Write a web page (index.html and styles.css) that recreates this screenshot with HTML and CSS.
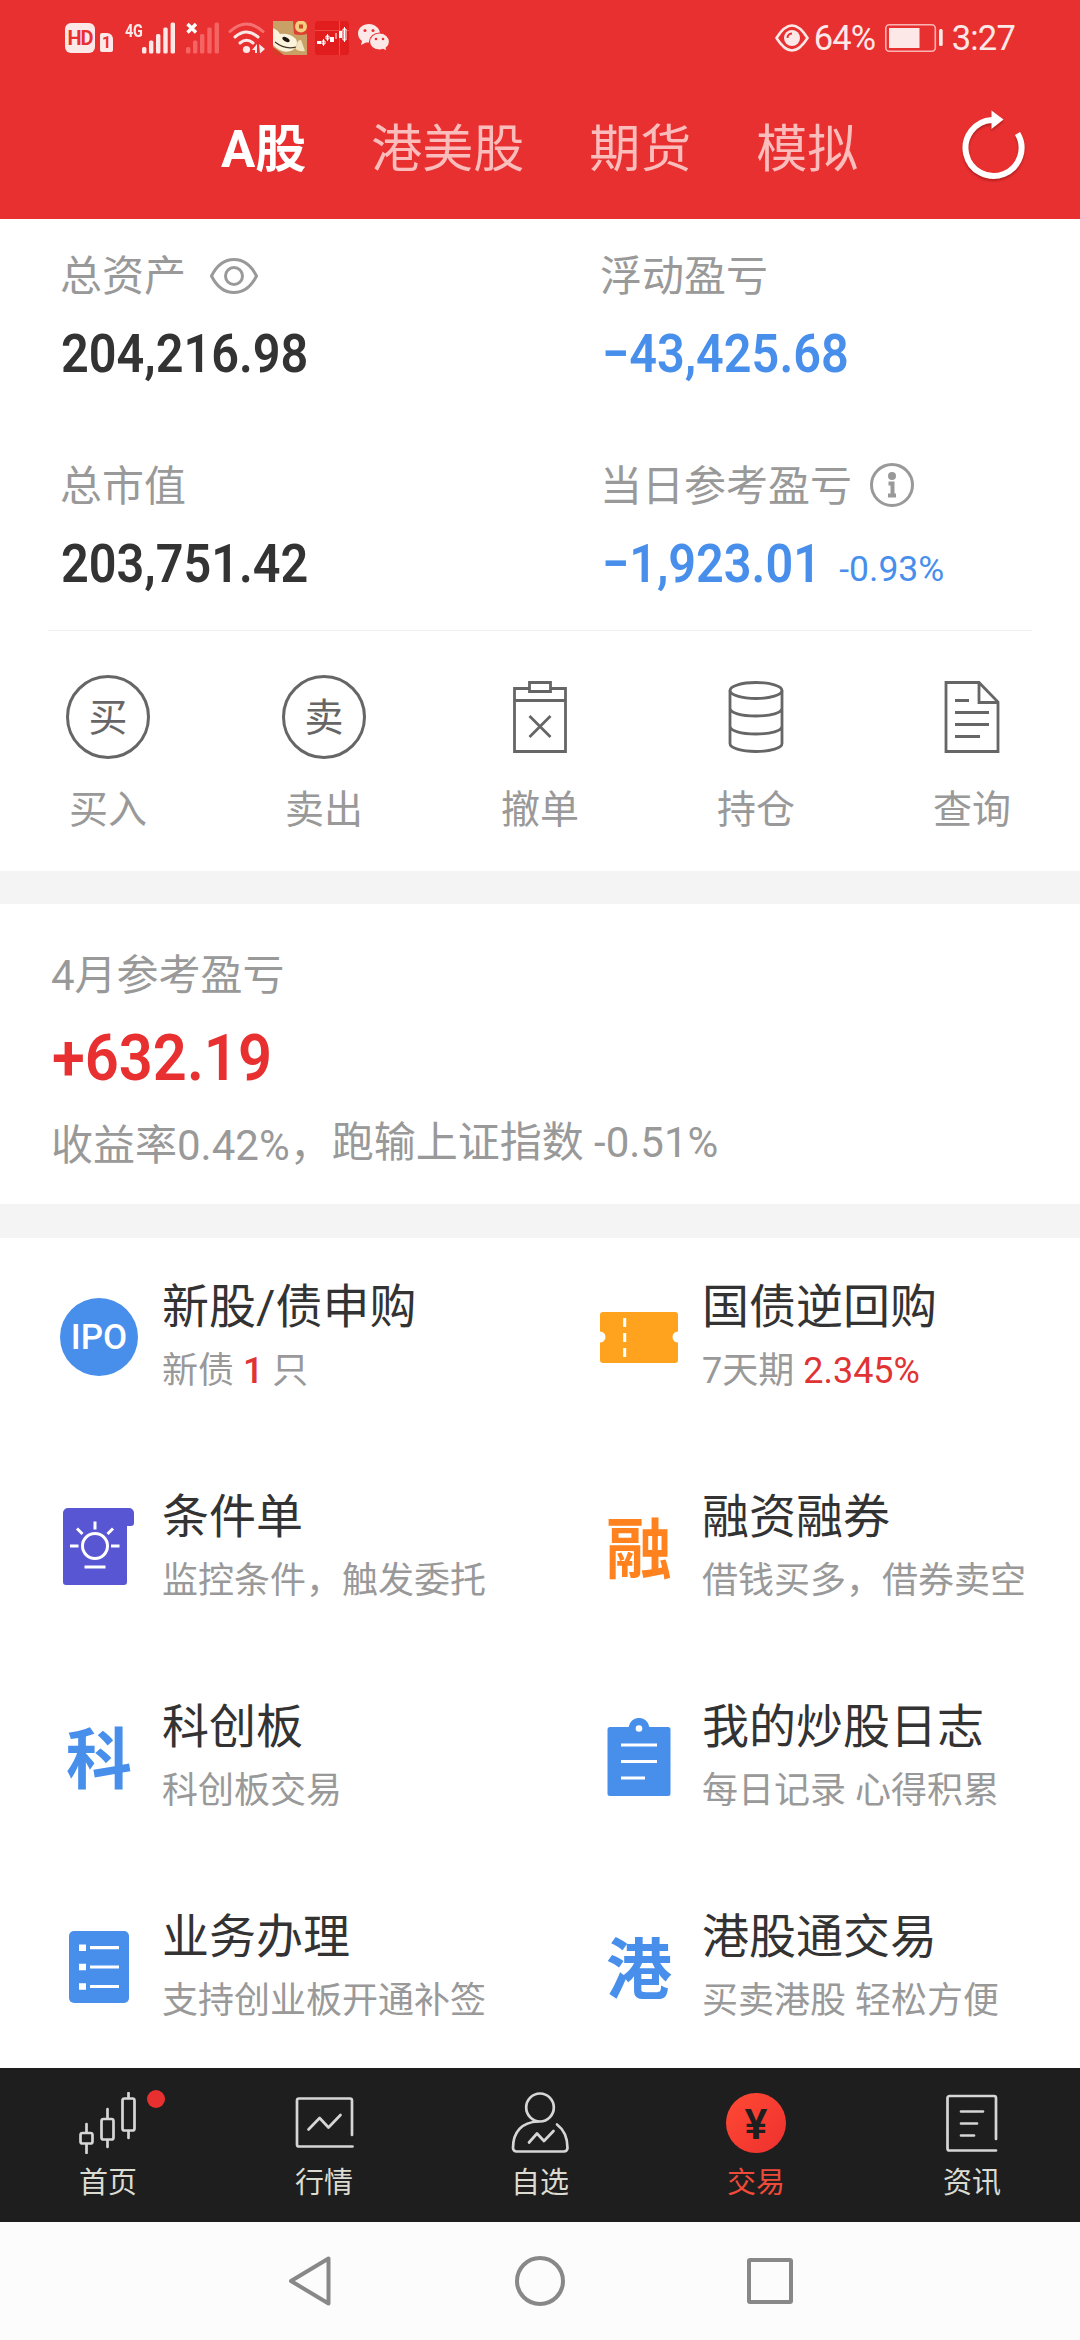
FILE: index.html
```html
<!DOCTYPE html>
<html lang="zh-CN">
<head>
<meta charset="utf-8">
<title>交易</title>
<link rel="stylesheet" href="styles.css">
</head>
<body>
<div class="screen">
  <header class="header">
    <div class="status">
      <div class="status-left">
        <span class="hd">HD</span>
        <span class="sim">1</span>
        <span class="net">4G</span>
        <svg class="signal" viewBox="0 0 33 32"><g fill="#fde8e8"><rect x="0" y="25" width="4.4" height="6.5" rx="1.5"/><rect x="7" y="18.500" width="4.400" height="13" rx="1.500"/><rect x="14" y="12" width="4.400" height="19.500" rx="1.500"/><rect x="21.300" y="5.500" width="4.400" height="26" rx="1.500"/><rect x="28.600" y="0.500" width="4.400" height="31" rx="1.500"/></g></svg>
        <svg class="signal off" viewBox="0 0 33 32"><g fill="#f56464"><rect x="0" y="25" width="4.400" height="6.500" rx="1.500"/><rect x="7" y="18.500" width="4.400" height="13" rx="1.500"/><rect x="14" y="12" width="4.400" height="19.500" rx="1.500"/><rect x="21.300" y="5.500" width="4.400" height="26" rx="1.500"/><rect x="28.600" y="0.500" width="4.400" height="31" rx="1.500"/></g><path d="M1.500 2l8.500 8.500M10 2l-8.500 8.500" stroke="#fff" stroke-width="3.400"/></svg>
        <svg class="wifi" viewBox="0 0 38 32"><g fill="none" stroke-linecap="round" stroke-width="3"><path d="M2 9.500Q18.500-5.500 35 9.500" stroke="#f57070"/><path d="M7 15q11.500-10 23 0M12 21q6.500-5.500 13 0" stroke="#fde8e8"/></g><circle cx="18.500" cy="27.500" r="3.600" fill="#fde8e8"/><path d="M24 28l5-6v9h-2v-3zM31 22l6 5-5 4.500z" fill="#fde8e8"/></svg>
        <svg class="app" viewBox="0 0 34 34"><rect width="34" height="34" fill="#c9a066"/><path d="M0 7Q5 9 7 13Q17 12 23 18Q26 24 20 29Q10 34 0 24z" fill="#fbf3dc"/><path d="M24 24q0-5 4-5l4 11q-7 1-10-3z" fill="#f3e4c0"/><path d="M2 21q10 8 21 5" fill="none" stroke="#443322" stroke-width="1.200"/><ellipse cx="13" cy="18.500" rx="4" ry="2" transform="rotate(30 13 18.500)" fill="#201510"/><path d="M0 26l11 8H0z" fill="#d83a28"/><path d="M20 0h14v13q-7 2-13 0z" fill="#dd4030"/><circle cx="28" cy="5.500" r="6" fill="#f5cf80"/><rect x="26" y="3.500" width="4" height="4" fill="#cf4a2a"/></svg>
        <svg class="app" viewBox="0 0 34 34"><rect width="34" height="34" rx="3" fill="#e11d1d"/><path d="M0 9.500h34M24.500 0v34" stroke="#ef4a45"/><path d="M2 20h4v3H2zM15 16h4v5h-4zM24 10h3v7h-3z" fill="#fff"/><path d="M8.500 18v7M7 20h3v3H7zM12.500 13v7M11 15h3v3h-3zM21 12v6M29.500 6v15M28 8h3v11h-3z" fill="#e11d1d" stroke="#fff" stroke-width="1"/></svg>
        <svg class="wechat" viewBox="0 0 32 28"><path d="M11 0C5 0 0 4 0 9.500c0 3 1.500 5.500 4 7.500l-1 4 5-2.500h3C17 18.500 22 14.500 22 9.500S17 0 11 0z" fill="#fde8e8"/><path d="M21.500 9C16 9 11.500 13 11.500 17.800S16 26 21.500 26c1.200 0 2.500-.2 3.600-.6l4 2-.9-3.300c2-1.500 3.300-3.800 3.300-6.300C31.500 13 27 9 21.500 9z" fill="#fde8e8" stroke="#e83030" stroke-width="1.200"/><g fill="#e83030"><circle cx="7" cy="6.500" r="1.500"/><circle cx="15" cy="6.500" r="1.500"/><circle cx="18" cy="15" r="1.300"/><circle cx="25" cy="15" r="1.300"/></g></svg>
      </div>
      <div class="status-right">
        <svg class="eye-care" viewBox="0 0 34 28"><path d="M1.500 14Q17-11 32.500 14Q17 39 1.500 14z" fill="none" stroke="#fde8e8" stroke-width="2.600"/><circle cx="17" cy="14" r="8" fill="#fde8e8"/><path d="M12.500 14q0-4 4.500-4.500" fill="none" stroke="#e83030" stroke-width="2"/></svg>
        <span class="percent">64%</span>
        <svg class="battery" viewBox="0 0 58 28"><rect x="0.800" y="0.800" width="49.500" height="26.400" rx="3.500" fill="none" stroke="#f9b4b4" stroke-width="1.600"/><rect x="4" y="4" width="30.500" height="20" fill="#fde8e8"/><rect x="54" y="5" width="3.700" height="17" rx="1.500" fill="#fde8e8"/></svg>
        <span class="clock">3:27</span>
      </div>
    </div>
    <nav class="tabs">
      <span class="tab active">A股</span><span class="tab">港美股</span><span class="tab">期货</span><span class="tab">模拟</span>
      <svg class="refresh" viewBox="0 0 70 76"><path d="M35 13A28 28 0 1 0 60.500 26.500" fill="none" stroke="#fff" stroke-width="6"/><path d="M34.500 3.500L46.500 12.500L34.500 22z" fill="#fff"/></svg>
    </nav>
  </header>

  <section class="assets">
    <div class="asset-grid">
      <div class="asset"><div class="label">总资产<svg class="eye" viewBox="0 0 50 38"><path d="M2.500 19C8 8 16 2.500 25 2.500S42 8 47.500 19C42 30 34 35.500 25 35.500S8 30 2.500 19z"/><circle cx="25" cy="19" r="8.500"/></svg></div><div class="amount"><b>204,216.98</b></div></div>
      <div class="asset"><div class="label">浮动盈亏</div><div class="amount down"><b>−43,425.68</b></div></div>
      <div class="asset"><div class="label">总市值</div><div class="amount"><b>203,751.42</b></div></div>
      <div class="asset"><div class="label">当日参考盈亏<svg class="info" viewBox="0 0 46 46"><circle cx="23" cy="23" r="20.500"/><circle class="dot" cx="23" cy="14" r="4"/><path d="M19.500 21.500H23.500V33M19 33.500H27"/></svg></div><div class="amount down"><b>−1,923.01</b><span class="rate">-0.93%</span></div></div>
    </div>
    <div class="actions">
      <div class="action"><span class="ring">买</span><span>买入</span></div>
      <div class="action"><span class="ring">卖</span><span>卖出</span></div>
      <div class="action"><svg viewBox="0 0 84 84"><path d="M31 13.500H16.500V76.500H67.500V13.500H53M16.500 25.500H67.500M31.500 7.500H52.500V16.500H31.500zM31.500 41l21 21M52.500 41l-21 21"/></svg><span>撤单</span></div>
      <div class="action"><svg viewBox="0 0 84 84"><ellipse cx="42" cy="15.500" rx="26" ry="8"/><path d="M16 15.500V68.500C16 73 27 76.500 42 76.500S68 73 68 68.500V15.500M16 33C16 38 27 41 42 41S68 38 68 33M16 51C16 56 27 59 42 59S68 56 68 51"/></svg><span>持仓</span></div>
      <div class="action"><svg viewBox="0 0 84 84"><path d="M16 7.500H49L68 27V76.500H16zM49 7.500V27.500H68M25 25.500H39M25 37.500H59M25 49.500H59M25 61.500H50"/></svg><span>查询</span></div>
    </div>
  </section>

  <section class="month">
    <div class="label">4月参考盈亏</div>
    <div class="gain"><b>+632.19</b></div>
    <div class="summary"><span class="yield">收益率0.42%，</span><span>跑输上证指数 -0.51%</span></div>
  </section>

  <section class="services">
    <div class="service"><span class="icon ipo">IPO</span><div><h3>新股/债申购</h3><p>新债 <em class="strong">1</em> 只</p></div></div>
    <div class="service"><svg class="icon" viewBox="0 0 78 78"><path d="M3 14H75a3 3 0 0 1 3 3V33.500a5.500 5.500 0 0 0 0 11V62a3 3 0 0 1-3 3H3a3 3 0 0 1-3-3V44.500a5.500 5.500 0 0 0 0-11V17a3 3 0 0 1 3-3z" fill="#ffa31f"/><path d="M24.700 20v9M24.700 35v9M24.700 50v9" stroke="#fff" stroke-width="3"/></svg><div><h3>国债逆回购</h3><p>7天期 <em>2.345%</em></p></div></div>
    <div class="service"><svg class="icon" viewBox="0 0 78 78"><path d="M8 0H69a5 5 0 0 1 5 5V15a3 3 0 0 1-3 3H67V74a3 3 0 0 1-3 3H6a3 3 0 0 1-3-3V5a5 5 0 0 1 5-5z" fill="#5956d3"/><g fill="none" stroke="#fff" stroke-width="3"><circle cx="35" cy="38" r="12.500"/><path d="M35 13.500v8M10 38h8.500M51 38h8.500M17 20.500l5.500 5.500M53 20.500l-5.500 5.500M24.500 59h21"/></g></svg><div><h3>条件单</h3><p>监控条件，触发委托</p></div></div>
    <div class="service"><span class="icon word orange">融</span><div><h3>融资融券</h3><p>借钱买多，借券卖空</p></div></div>
    <div class="service"><span class="icon word">科</span><div><h3>科创板</h3><p>科创板交易</p></div></div>
    <div class="service"><svg class="icon" viewBox="0 0 78 78"><path d="M10 9H28.600a10.500 10.500 0 0 1 20.800 0H68a2.500 2.500 0 0 1 2.500 2.500V75.500a2.500 2.500 0 0 1-2.500 2.500H10a2.500 2.500 0 0 1-2.500-2.500V11.500A2.500 2.500 0 0 1 10 9z" fill="#488fec"/><circle cx="39" cy="10.500" r="3.300" fill="#fff"/><path d="M21 27H57M21 43.500H57M21 60H45" stroke="#fff" stroke-width="3"/></svg><div><h3>我的炒股日志</h3><p>每日记录 心得积累</p></div></div>
    <div class="service"><svg class="icon" viewBox="0 0 78 78"><rect x="9" y="3" width="60" height="72" rx="5" fill="#488fec"/><path d="M30 19.700H59M30 39H59M30 58.500H59" stroke="#fff" stroke-width="3.200"/><path d="M19 19.700h7M19 39h7M19 58.500h7" stroke="#fff" stroke-width="6.600"/></svg><div><h3>业务办理</h3><p>支持创业板开通补签</p></div></div>
    <div class="service"><span class="icon word">港</span><div><h3>港股通交易</h3><p>买卖港股 轻松方便</p></div></div>
  </section>

  <nav class="tabbar">
    <div class="item"><svg viewBox="0 0 60 62"><path d="M8.500 32v8M8.500 52v9M29.500 17v9M29.500 48v7M50.500 1v5M50.500 39v7"/><rect x="2.500" y="41" width="12" height="10.500" rx="2"/><rect x="23.500" y="27" width="12" height="20.500" rx="2"/><rect x="44.500" y="6.500" width="12" height="32" rx="2"/></svg><span>首页</span><i class="badge"></i></div>
    <div class="item"><svg viewBox="0 0 60 62"><path d="M58 43V8.500a2 2 0 0 0-2-2H5a2 2 0 0 0-2 2V52.500a2 2 0 0 0 2 2H58.500M14.500 37.500L25.600 26L34.500 35.500L46.500 23"/></svg><span>行情</span></div>
    <div class="item"><svg viewBox="0 0 60 62"><ellipse cx="30" cy="15.500" rx="13.800" ry="14"/><path d="M28 29.500C12 30 3 40 3 56a3.500 3.500 0 0 0 3.500 3.500H54a3.500 3.500 0 0 0 3.500-3.500C57.500 44 53 37 47 32.500M19 50.500L27 41.500L34 49L43.500 39"/></svg><span>自选</span></div>
    <div class="item on"><span class="yen">¥</span><span>交易</span></div>
    <div class="item"><svg viewBox="0 0 60 62"><path d="M54 47V6a2 2 0 0 0-2-2H7.500a2 2 0 0 0-2 2V56.500a2 2 0 0 0 2 2H54M19 19.500H41M19 31.500H35M19 43.500H32"/></svg><span>资讯</span></div>
  </nav>

  <footer class="sysnav">
    <svg viewBox="0 0 50 52"><path d="M43.500 3.500V48.500L6 26z"/></svg>
    <svg viewBox="0 0 50 52"><circle cx="25" cy="26" r="23"/></svg>
    <svg viewBox="0 0 50 52"><rect x="4" y="5" width="42" height="42" rx="1"/></svg>
  </footer>
</div>
</body>
</html>
```
FILE: styles.css
```css
* { box-sizing: border-box; margin: 0; padding: 0; }
body { width: 1080px; height: 2340px; overflow: hidden; background: #fff; font-family: Roboto, "Noto Sans CJK SC", sans-serif; }
svg { display: block; flex: none; fill: none; }
.screen { display: flex; flex-direction: column; width: 1080px; height: 2340px; }

.header { height: 219px; background: #e83030; }
.status { height: 76px; display: flex; justify-content: space-between; align-items: center; padding: 0 65px; color: #fde8e8; }
.status-left, .status-right { display: flex; align-items: center; }
.hd { width: 30px; height: 30px; border-radius: 6px; background: #fde8e8; color: #e83030; font: 700 20px/30px Roboto, sans-serif; text-align: center; letter-spacing: -1px; }
.sim { width: 13px; height: 19px; margin: 8px 0 0 5px; border-radius: 2px 6px 2px 2px; background: #fde8e8; color: #e83030; font: 700 16px/19px Roboto, sans-serif; text-align: center; }
.net { width: 17px; margin-left: 12px; font: 700 19px/19px Roboto, sans-serif; align-self: flex-start; letter-spacing: -.5px; transform: scaleX(.76); transform-origin: left; white-space: nowrap; }
.signal { width: 33px; height: 32px; }
.off { margin-left: 11px; }
.wifi { width: 38px; height: 32px; margin-left: 9px; }
.app { width: 34px; height: 34px; margin: 0 0 0 7px; }
.app + .app { margin-left: 8px; }
.wechat { width: 32px; height: 28px; margin-left: 9px; }
.eye-care { width: 34px; height: 28px; }
.percent, .clock { font-size: 34.500px; line-height: 40px; letter-spacing: -.8px; }
.percent { width: 63px; margin-left: 5px; }
.battery { width: 58px; height: 28px; margin-left: 8px; }
.clock { margin-left: 9px; }

.tabs { height: 143px; display: flex; align-items: center; gap: 65px; padding-left: 221px; color: #fbbcbc; font-size: 51px; line-height: 70px; }
.tab { margin-top: 5px; font-weight: 400; white-space: nowrap; }
.tab.active { color: #fff; font-weight: 700; }
.refresh { width: 70px; height: 76px; margin: -6px 0 0 34px; filter: drop-shadow(0 2px 1px rgba(90, 0, 0, .35)); }

.assets { height: 652px; padding-top: 33px; }
.asset-grid { display: grid; grid-template-columns: 1fr 1fr; row-gap: 79px; margin: 0 0 37px; }
.asset { padding-left: 60px; }
.label { display: flex; align-items: center; height: 50px; color: #999; font-size: 42px; line-height: 50px; }
.label svg { stroke: #999; stroke-width: 3; }
.eye { width: 50px; height: 38px; margin: -2px 0 0 23px; }
.info { width: 46px; height: 46px; margin: -5px 0 0 17px; }
.info .dot { fill: #999; stroke: none; }
.info path { stroke-width: 4; }
.amount { display: flex; height: 60px; margin: 22px 0 -1px 1px; color: #333; font-size: 54px; line-height: 60px; }
.amount b { font-weight: 600; transform: scaleX(.9); transform-origin: left; }
.down { margin-left: 2px; color: #488fec; }
.rate { margin: 10px 0 0 -6px; font-size: 35.500px; line-height: 50px; }
.actions { display: flex; height: 241px; margin: 0 48px; padding: 44px 0 0; border-top: 1px solid #eee; justify-content: space-between; }
.action { display: flex; flex-direction: column; align-items: center; width: 120px; gap: 26px; color: #999; font-size: 39px; line-height: 50px; }
.action svg { width: 84px; height: 84px; stroke: #666; stroke-width: 2.800; }
.ring { width: 84px; height: 84px; border: 3px solid #666; border-radius: 50%; color: #666; line-height: 80px; text-align: center; }

.month { height: 367px; border: solid #f4f4f4; border-width: 33px 0 34px; padding: 47px 0 0 51px; }
.gain { height: 70px; margin: 22px 0 0 1px; color: #e83030; font-size: 65.500px; line-height: 70px; }
.gain b { display: inline-block; font-weight: 600; transform: scaleX(.91); transform-origin: left; }
.summary { display: flex; height: 50px; margin-top: 25px; color: #999; font-size: 42px; line-height: 50px; }
.yield { margin-top: 3px; }

.services { display: grid; grid-template-columns: 1fr 1fr; grid-auto-rows: 210px; height: 830px; overflow: hidden; }
.service { display: flex; gap: 24px; padding: 39px 0 0 60px; }
.icon { flex: none; width: 78px; height: 78px; margin-top: 21px; }
.ipo { border-radius: 50%; background: #488fec; color: #fff; font: 500 35px/80px Roboto, sans-serif; text-align: center; }
.word { color: #488fec; font: 700 66px/72px "Noto Sans CJK SC", sans-serif; text-align: center; }
.orange { color: #ff821e; }
.service h3 { color: #333; font-size: 47px; font-weight: 400; line-height: 60px; }
.service p { margin-top: 11px; color: #999; font-size: 36px; line-height: 46px; white-space: nowrap; }
.service em { color: #e03434; font-style: normal; }
.service .strong { font-weight: 500; }

.tabbar { display: flex; height: 154px; background: #1e1e1e; }
.item { position: relative; display: flex; flex: 1; flex-direction: column; align-items: center; padding-top: 24px; color: #dbdbd2; font-size: 29px; line-height: 36px; gap: 11px; }
.item svg { width: 60px; height: 62px; stroke: #d6d6d6; stroke-width: 2.700; stroke-linejoin: round; stroke-linecap: round; }
.badge { position: absolute; left: 147px; top: 22px; width: 18px; height: 18px; border-radius: 50%; background: #e83030; }
.on { color: #f04a3a; }
.yen { width: 60px; height: 60px; margin: 1px 0; border-radius: 50%; background: linear-gradient(135deg, #ff4a34, #ee302f); color: #1e1e1e; font: 600 43px/62px Roboto, sans-serif; text-align: center; }

.sysnav { display: flex; flex: 1; align-items: center; justify-content: center; gap: 180px; background: #fcfcfc; }
.sysnav svg { width: 50px; height: 52px; stroke: #888; stroke-width: 4; stroke-linejoin: round; }
```
